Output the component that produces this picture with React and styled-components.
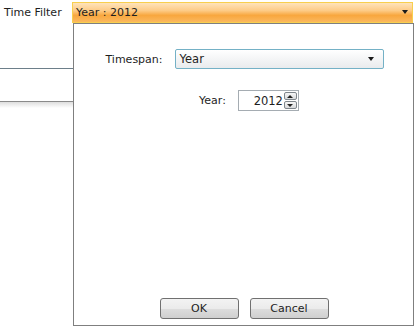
import React from "react";
import styled, { createGlobalStyle } from "styled-components";

const GlobalStyle = createGlobalStyle`
  html, body {
    margin: 0;
    padding: 0;
    background: #ffffff;
  }
  body {
    font-family: "DejaVu Sans", "Liberation Sans", sans-serif;
    font-size: 11px;
    color: #1e1e1e;
  }
`;

const Page = styled.div`
  position: relative;
  width: 415px;
  height: 327px;
  overflow: hidden;
`;

const FilterBar = styled.div`
  display: flex;
  align-items: center;
  height: 23px;
  padding-left: 4px;
  padding-top: 1px;
  box-sizing: border-box;
`;

const FilterLabel = styled.span`
  width: 68px;
  flex: none;
  line-height: 21px;
`;

const OrangeCombo = styled.div`
  display: flex;
  align-items: center;
  justify-content: space-between;
  width: 341px;
  height: 21px;
  box-sizing: border-box;
  border: 1px solid #f8cf4e;
  padding: 0 4px 0 3px;
  background: linear-gradient(#fee3bb 0%, #fdcb86 40%, #f8a73e 65%, #fbb85e 100%);
`;

const Arrow = styled.span`
  width: 0;
  height: 0;
  border-left: 3px solid transparent;
  border-right: 3px solid transparent;
  border-top: 4px solid #1a1a1a;
`;

const Backdrop = styled.div`
  width: 73px;
`;

const BlueRule = styled.div`
  height: 1px;
  margin-top: 45px;
  background: #6d7f8a;
`;

const ShadowRule = styled.div`
  margin-top: 32px;
  height: 6px;
  border-top: 1px solid #8a8a8a;
  background: linear-gradient(#dedede, #ffffff);
`;

const Popup = styled.div`
  position: absolute;
  left: 73px;
  top: 23px;
  width: 341px;
  height: 303px;
  box-sizing: border-box;
  border: 1px solid #7f7f7f;
  background: #ffffff;
  display: flex;
  flex-direction: column;
  align-items: center;
  padding-top: 25px;
  padding-bottom: 6px;
`;

const Row = styled.div`
  display: flex;
  align-items: center;
  gap: 12px;
  margin-left: ${(p) => p.$shift || 0}px;
  margin-top: ${(p) => p.$top || 0}px;
`;

const BlueCombo = styled.div`
  display: flex;
  align-items: center;
  justify-content: space-between;
  width: 209px;
  height: 20px;
  box-sizing: border-box;
  border: 1px solid #74b1c6;
  border-radius: 2px;
  padding: 0 9px 0 4px;
  background: linear-gradient(#ffffff, #e9ebed);
  font-size: 11.5px;
`;

const NumberBox = styled.div`
  display: flex;
  align-items: center;
  width: 61px;
  height: 21px;
  box-sizing: border-box;
  border: 1px solid #a5acb2;
  padding-right: 1px;
  background: #ffffff;
  font-size: 11.5px;
`;

const NumberValue = styled.span`
  flex: 1;
  text-align: right;
  padding-right: 1px;
`;

const Spinner = styled.div`
  display: flex;
  flex-direction: column;
  gap: 1px;
`;

const SpinButton = styled.div`
  width: 13px;
  height: 8px;
  box-sizing: border-box;
  border: 1px solid #7f868c;
  border-radius: 2px;
  background: linear-gradient(#f6f6f6, #d8dadc);
  display: flex;
  align-items: center;
  justify-content: center;
`;

const SpinArrow = styled.span`
  width: 0;
  height: 0;
  border-left: 3px solid transparent;
  border-right: 3px solid transparent;
  ${(p) =>
    p.$up ? "border-bottom: 3px solid #222;" : "border-top: 3px solid #222;"}
`;

const Spacer = styled.div`
  flex: 1;
`;

const ButtonRow = styled.div`
  display: flex;
  gap: 11px;
  margin-left: 1px;
`;

const Button = styled.button`
  width: 79px;
  height: 21px;
  box-sizing: border-box;
  border: 1px solid #707070;
  border-radius: 3px;
  background: linear-gradient(#f3f3f3 0%, #ebebeb 50%, #dddddd 51%, #cfcfcf 100%);
  font-family: "DejaVu Sans", "Liberation Sans", sans-serif;
  font-size: 11px;
  color: #1e1e1e;
  padding: 0;
`;

export default function App() {
  return (
    <Page>
      <GlobalStyle />
      <FilterBar>
        <FilterLabel>Time Filter</FilterLabel>
        <OrangeCombo>
          <span>Year : 2012</span>
          <Arrow />
        </OrangeCombo>
      </FilterBar>
      <Backdrop>
        <BlueRule />
        <ShadowRule />
      </Backdrop>
      <Popup>
        <Row $shift={2}>
          <span>Timespan:</span>
          <BlueCombo>
            <span>Year</span>
            <Arrow />
          </BlueCombo>
        </Row>
        <Row $top={21} $shift={11}>
          <span>Year:</span>
          <NumberBox>
            <NumberValue>2012</NumberValue>
            <Spinner>
              <SpinButton>
                <SpinArrow $up />
              </SpinButton>
              <SpinButton>
                <SpinArrow />
              </SpinButton>
            </Spinner>
          </NumberBox>
        </Row>
        <Spacer />
        <ButtonRow>
          <Button>OK</Button>
          <Button>Cancel</Button>
        </ButtonRow>
      </Popup>
    </Page>
  );
}
